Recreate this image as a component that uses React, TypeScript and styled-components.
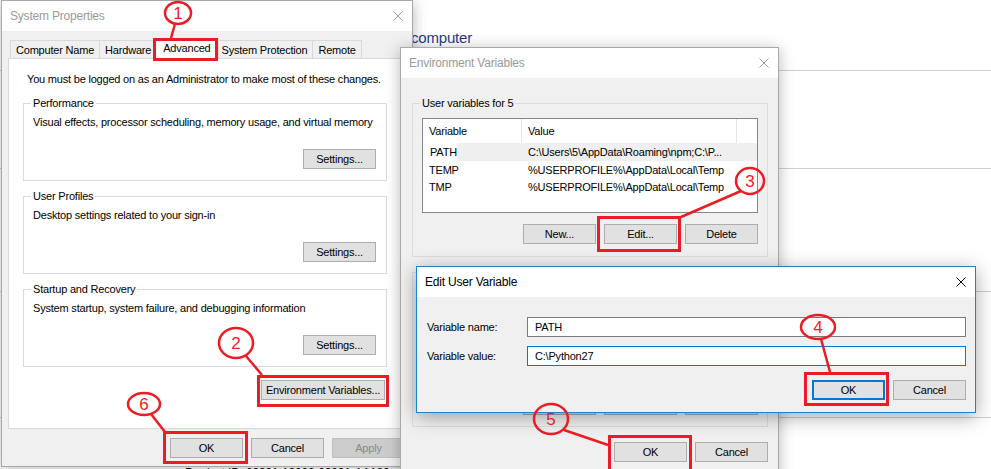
import React from 'react';
import styled, { createGlobalStyle } from 'styled-components';

const UI_FONT = '"Liberation Sans", Arial, sans-serif';
const RED = '#ed1c24';

const GlobalStyle = createGlobalStyle`
  html, body {
    margin: 0;
    padding: 0;
    background: #fff;
    overflow: hidden;
  }
  body {
    font-family: ${UI_FONT};
    font-size: 11px;
    color: #000;
  }
  * {
    box-sizing: border-box;
  }
`;

const Desktop = styled.div`
  position: relative;
  width: 991px;
  height: 469px;
  overflow: hidden;
  background: #fff;
  letter-spacing: -0.2px;
`;

// control panel page that sits behind the dialogs
const Backdrop = styled.div`
  position: absolute;
  inset: 0;
  display: flex;
  flex-direction: column;
`;

const PageHeading = styled.h1`
  margin: 28px 0 0 411px;
  font: normal 15px/20px ${UI_FONT};
  color: #1e3a8f;
`;

const Rule = styled.hr<{ $gap: number }>`
  margin: ${p => p.$gap}px 0 0;
  height: 0;
  border: 0;
  border-top: 1px solid #cfcfcf;
`;

const ProductId = styled.div`
  margin: 48px 0 0 185px;
  font-size: 12px;
  line-height: 14px;
`;

const Window = styled.div<{ $x: number; $y: number; $w: number; $h: number; $active?: boolean }>`
  position: absolute;
  left: ${p => p.$x}px;
  top: ${p => p.$y}px;
  width: ${p => p.$w}px;
  height: ${p => p.$h}px;
  display: flex;
  flex-direction: column;
  background: #f0f0f0;
  border: 1px solid ${p => (p.$active ? '#1883d7' : '#a9a9a9')};
  box-shadow: ${p => (p.$active ? '0 4px 18px rgba(0,0,0,0.35)' : '0 2px 14px rgba(0,0,0,0.28)')};
`;

const TitleBar = styled.div<{ $active?: boolean }>`
  flex: none;
  height: 30px;
  display: flex;
  align-items: center;
  justify-content: space-between;
  padding: 0 9px 0 8px;
  background: #fff;
  color: ${p => (p.$active ? '#000' : '#9a9a9a')};
  font-size: 12px;
`;

const CloseGlyph = ({ color }: { color: string }) => (
  <svg width="10" height="10" viewBox="0 0 10 10">
    <path d="M0.5 0.5 L9.5 9.5 M9.5 0.5 L0.5 9.5" stroke={color} strokeWidth="1" fill="none" />
  </svg>
);

const Button = styled.button<{ $w?: number; $focused?: boolean; $off?: boolean }>`
  flex: none;
  width: ${p => p.$w ?? 73}px;
  height: 20px;
  padding: 0;
  font: 11px ${UI_FONT};
  letter-spacing: inherit;
  color: ${p => (p.$off ? '#8a8a8a' : '#000')};
  background: ${p => (p.$off ? '#cccccc' : '#e1e1e1')};
  border: ${p => (p.$focused ? '2px solid #0078d7' : `1px solid ${p.$off ? '#bfbfbf' : '#adadad'}`)};
`;

const ButtonRow = styled.div<{ $top: number; $inset?: number }>`
  display: flex;
  justify-content: flex-end;
  gap: 8px;
  margin-top: ${p => p.$top}px;
  margin-right: ${p => p.$inset ?? 0}px;
`;

/* ---------- System Properties ---------- */

const SysBody = styled.div`
  flex: 1;
  display: flex;
  flex-direction: column;
  padding: 7px 7px 8px 6px;
`;

const TabStrip = styled.div`
  position: relative;
  z-index: 1;
  display: flex;
  align-items: flex-end;
  height: 21px;
  margin-bottom: -1px;
  padding-left: 3px;
`;

const Tab = styled.div<{ $active?: boolean }>`
  position: relative;
  z-index: ${p => (p.$active ? 2 : 1)};
  height: ${p => (p.$active ? 21 : 18)}px;
  margin: 0 ${p => (p.$active ? -2 : 0)}px ${p => (p.$active ? 0 : 1)}px ${p => (p.$active ? -2 : -1)}px;
  padding: 0 ${p => (p.$active ? 7 : 5)}px ${p => (p.$active ? 3 : 0)}px;
  display: flex;
  align-items: center;
  background: ${p => (p.$active ? '#fff' : '#f0f0f0')};
  border: 1px solid #d9d9d9;
  border-bottom: none;
  white-space: nowrap;
`;

const TabPanel = styled.div`
  flex: none;
  height: 371px;
  display: flex;
  flex-direction: column;
  padding: 13px 17px 0 14px;
  background: #fff;
  border: 1px solid #d9d9d9;
`;

const Notice = styled.p`
  margin: 0 0 10px 4px;
  line-height: 14px;
`;

const GroupBox = styled.fieldset<{ $pad?: string; $top?: number }>`
  margin: ${p => p.$top ?? 0}px 0 8px;
  padding: ${p => p.$pad ?? '0 10px 11px 9px'};
  min-width: 0;
  border: 1px solid #dcdcdc;
`;

const GroupLabel = styled.legend`
  margin-left: -2px;
  padding: 0 2px;
  line-height: 14px;
`;

const GroupText = styled.p`
  margin: 5px 0 0;
  line-height: 14px;
`;

/* ---------- Environment Variables ---------- */

const EnvBody = styled.div`
  flex: 1;
  display: flex;
  flex-direction: column;
  padding: 18px 10px 0 11px;
`;

const ListView = styled.div<{ $top?: number }>`
  flex: none;
  height: 95px;
  margin-top: ${p => p.$top ?? 8}px;
  display: flex;
  flex-direction: column;
  background: #fff;
  border: 1px solid #828790;
  overflow: hidden;
`;

const ListRow = styled.div<{ $h: number; $selected?: boolean }>`
  display: grid;
  grid-template-columns: 99px 215px;
  height: ${p => p.$h}px;
  background: ${p => (p.$selected ? 'linear-gradient(to right, transparent 34px, #efefef 34px)' : 'transparent')};
`;

const HeadCell = styled.div`
  display: flex;
  align-items: center;
  padding-left: 6px;
  border-right: 1px solid #e5e5e5;
`;

const Cell = styled.div<{ $indent?: number }>`
  display: flex;
  align-items: center;
  padding-left: ${p => p.$indent ?? 6}px;
  white-space: nowrap;
  overflow: hidden;
`;

/* ---------- Edit User Variable ---------- */

const EditBody = styled.div`
  flex: 1;
  display: flex;
  flex-direction: column;
  padding: 20px 9px 11px 10px;
`;

const FieldRow = styled.div<{ $top: number }>`
  display: grid;
  grid-template-columns: 100px 1fr;
  align-items: center;
  margin-top: ${p => p.$top}px;
`;

const FieldLabel = styled.label`
  line-height: 14px;
`;

const TextBox = styled.input<{ $focused?: boolean }>`
  height: 20px;
  padding: 0 0 0 7px;
  font: 11px ${UI_FONT};
  letter-spacing: inherit;
  color: #000;
  background: #fff;
  border: 1px solid ${p => (p.$focused ? '#0078d7' : '#7a7a7a')};
  outline: none;
`;

/* ---------- red call-outs drawn on top ---------- */

const Overlay = styled.svg`
  position: absolute;
  inset: 0;
  z-index: 10;
  pointer-events: none;
`;

const marks = [
  { n: '1', cx: 178, cy: 13, rx: 13, ry: 11, line: [175, 24, 171, 38] },
  { n: '2', cx: 236, cy: 343, rx: 17, ry: 15, line: [246, 356, 262, 375] },
  { n: '3', cx: 750, cy: 181, rx: 14, ry: 13, line: [741, 191, 681, 217] },
  { n: '4', cx: 818, cy: 327, rx: 17, ry: 12, line: [821, 339, 830, 372] },
  { n: '5', cx: 551, cy: 419, rx: 17, ry: 15, line: [564, 430, 608, 445] },
  { n: '6', cx: 144, cy: 404, rx: 16, ry: 11, line: [151, 414, 165, 432] },
];

const boxes = [
  [153, 38, 218, 61],
  [257, 375, 389, 407],
  [163, 431, 248, 464],
  [597, 216, 681, 252],
  [804, 372, 889, 406],
  [608, 435, 692, 474],
];

const Callouts = () => (
  <Overlay width="991" height="469" viewBox="0 0 991 469">
    {boxes.map(([x1, y1, x2, y2], i) => (
      <rect key={i} x={x1 + 1.5} y={y1 + 1.5} width={x2 - x1 - 3} height={y2 - y1 - 3} fill="none" stroke={RED} strokeWidth="3" />
    ))}
    {marks.map(m => (
      <g key={m.n}>
        <line x1={m.line[0]} y1={m.line[1]} x2={m.line[2]} y2={m.line[3]} stroke={RED} strokeWidth="2.5" />
        <ellipse cx={m.cx} cy={m.cy} rx={m.rx} ry={m.ry} fill="none" stroke={RED} strokeWidth="2.5" />
        <text x={m.cx} y={m.cy + 6} textAnchor="middle" fontSize="17" fontFamily={UI_FONT} fill={RED}>
          {m.n}
        </text>
      </g>
    ))}
  </Overlay>
);

const groups = [
  { title: 'Performance', text: 'Visual effects, processor scheduling, memory usage, and virtual memory' },
  { title: 'User Profiles', text: 'Desktop settings related to your sign-in' },
  { title: 'Startup and Recovery', text: 'System startup, system failure, and debugging information' },
];

const userVars = [
  { name: 'PATH', value: 'C:\\Users\\5\\AppData\\Roaming\\npm;C:\\P...', h: 18, selected: true },
  { name: 'TEMP', value: '%USERPROFILE%\\AppData\\Local\\Temp', h: 17 },
  { name: 'TMP', value: '%USERPROFILE%\\AppData\\Local\\Temp', h: 17 },
];

const App = () => {
  const tabs = ['Computer Name', 'Hardware', 'Advanced', 'System Protection', 'Remote'];

  return (
    <Desktop>
      <GlobalStyle />

      <Backdrop>
        <PageHeading>computer</PageHeading>
        <Rule $gap={22} />
        <Rule $gap={97} />
        <Rule $gap={122} />
        <Rule $gap={125} />
        <ProductId>Product ID: 00331-10000-00001-AA180</ProductId>
      </Backdrop>

      <Window $x={1} $y={0} $w={412} $h={467}>
        <TitleBar>
          <span>System Properties</span>
          <CloseGlyph color="#9a9a9a" />
        </TitleBar>
        <SysBody>
          <TabStrip>
            {tabs.map(t => (
              <Tab key={t} $active={t === 'Advanced'}>
                {t}
              </Tab>
            ))}
          </TabStrip>
          <TabPanel>
            <Notice>You must be logged on as an Administrator to make most of these changes.</Notice>
            {groups.map(g => (
              <GroupBox key={g.title}>
                <GroupLabel>{g.title}</GroupLabel>
                <GroupText>{g.text}</GroupText>
                <ButtonRow $top={20}>
                  <Button>Settings...</Button>
                </ButtonRow>
              </GroupBox>
            ))}
            <ButtonRow $top={5} $inset={2}>
              <Button $w={124}>Environment Variables...</Button>
            </ButtonRow>
          </TabPanel>
          <ButtonRow $top={9}>
            <Button>OK</Button>
            <Button>Cancel</Button>
            <Button $off>Apply</Button>
          </ButtonRow>
        </SysBody>
      </Window>

      <Window $x={400} $y={47} $w={379} $h={440}>
        <TitleBar>
          <span>Environment Variables</span>
          <CloseGlyph color="#9a9a9a" />
        </TitleBar>
        <EnvBody>
          <GroupBox $pad="0 9px 12px 9px">
            <GroupLabel>User variables for 5</GroupLabel>
            <ListView>
              <ListRow $h={24}>
                <HeadCell>Variable</HeadCell>
                <HeadCell>Value</HeadCell>
              </ListRow>
              {userVars.map(r => (
                <ListRow key={r.name} $h={r.h} $selected={r.selected}>
                  <Cell $indent={r.selected ? 7 : 6}>{r.name}</Cell>
                  <Cell>{r.value}</Cell>
                </ListRow>
              ))}
            </ListView>
            <ButtonRow $top={11}>
              <Button>New...</Button>
              <Button>Edit...</Button>
              <Button>Delete</Button>
            </ButtonRow>
          </GroupBox>
          {/* system variables group: only its lower edge shows below the edit dialog */}
          <GroupBox $top={7} $pad="0 9px 11px 9px">
            <ListView $top={16} />
            <ButtonRow $top={11}>
              <Button aria-hidden />
              <Button aria-hidden />
              <Button aria-hidden />
            </ButtonRow>
          </GroupBox>
          <ButtonRow $top={7}>
            <Button>OK</Button>
            <Button>Cancel</Button>
          </ButtonRow>
        </EnvBody>
      </Window>

      <Window $x={416} $y={266} $w={560} $h={147} $active>
        <TitleBar $active>
          <span>Edit User Variable</span>
          <CloseGlyph color="#000" />
        </TitleBar>
        <EditBody>
          <FieldRow $top={0}>
            <FieldLabel htmlFor="var-name">Variable name:</FieldLabel>
            <TextBox id="var-name" readOnly value="PATH" />
          </FieldRow>
          <FieldRow $top={9}>
            <FieldLabel htmlFor="var-value">Variable value:</FieldLabel>
            <TextBox id="var-value" readOnly $focused value="C:\Python27" />
          </FieldRow>
          <ButtonRow $top={14}>
            <Button $focused>OK</Button>
            <Button>Cancel</Button>
          </ButtonRow>
        </EditBody>
      </Window>

      <Callouts />
    </Desktop>
  );
};

export default App;
